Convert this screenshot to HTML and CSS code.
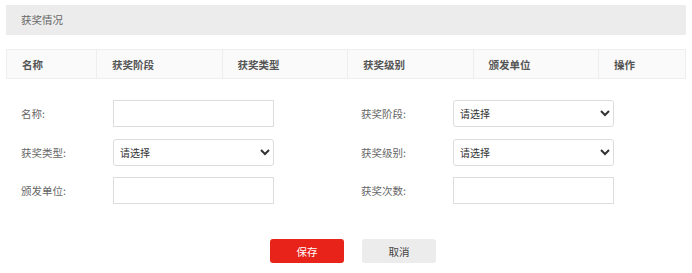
FILE: index.html
```html
<!DOCTYPE html>
<html lang="zh-CN">
<head>
    <meta charset="UTF-8">
    <meta name="viewport" content="width=device-width, initial-scale=1.0">
    <title>获奖情况</title>
    <link rel="stylesheet" href="styles.css">
</head>
<body>
    <div class="section-title">获奖情况</div>

    <table class="award-table">
        <thead>
            <tr>
                <th class="col-name">名称</th>
                <th class="col-mid">获奖阶段</th>
                <th class="col-mid">获奖类型</th>
                <th class="col-mid">获奖级别</th>
                <th class="col-mid">颁发单位</th>
                <th>操作</th>
            </tr>
        </thead>
    </table>

    <form class="award-form">
        <div class="field">
            <label>名称:</label>
            <input type="text">
        </div>
        <div class="field">
            <label>获奖阶段:</label>
            <select><option>请选择</option></select>
        </div>
        <div class="field">
            <label>获奖类型:</label>
            <select><option>请选择</option></select>
        </div>
        <div class="field">
            <label>获奖级别:</label>
            <select><option>请选择</option></select>
        </div>
        <div class="field">
            <label>颁发单位:</label>
            <input type="text">
        </div>
        <div class="field">
            <label>获奖次数:</label>
            <input type="text">
        </div>
    </form>

    <div class="actions">
        <button class="btn btn-save">保存</button>
        <button class="btn btn-cancel">取消</button>
    </div>
</body>
</html>
```

FILE: styles.css
```css
body {
    margin: 5px 6px;
    font-family: "Noto Sans CJK SC", "Noto Sans", sans-serif;
    font-size: 10.5px;
    color: #555;
    background-color: #fff;
}
.section-title {
    height: 30px;
    line-height: 30px;
    padding-left: 15px;
    background-color: #ececec;
    color: #666;
}

.award-table {
    width: 100%;
    margin-top: 14px;
    border-collapse: collapse;
    table-layout: fixed;
}
.award-table th {
    height: 28px;
    padding: 0 15px;
    text-align: left;
    font-weight: bold;
    color: #555;
    background-color: #fafafa;
    border: 1px solid #eee;
}
.award-table .col-name {
    width: 59px;
}
.award-table .col-mid {
    width: 94.5px;
}

.award-form {
    display: grid;
    grid-template-columns: 1fr 1fr;
    row-gap: 11.5px;
    margin-top: 21px;
}
.field {
    display: flex;
    align-items: center;
    padding-left: 15px;
}
.field label {
    width: 92px;
    color: #666;
}
.field input,
.field select {
    width: 161px;
    height: 27px;
    box-sizing: border-box;
    border: 1px solid #ddd;
    font-family: inherit;
    font-size: 10px;
    color: #333;
    background-color: #fff;
}
.field input {
    border-radius: 0;
    padding: 0 6px;
}
.field select {
    border-radius: 3px;
    padding-left: 2px;
}

.actions {
    display: flex;
    justify-content: center;
    gap: 18px;
    margin-top: 35px;
    padding-left: 14px;
}
.btn {
    width: 74px;
    height: 24px;
    border: none;
    border-radius: 3px;
    font-family: inherit;
    font-size: 10.5px;
    cursor: pointer;
}
.btn-save {
    background-color: #e8231a;
    color: #fff;
}
.btn-cancel {
    background-color: #ececec;
    color: #444;
}
```
